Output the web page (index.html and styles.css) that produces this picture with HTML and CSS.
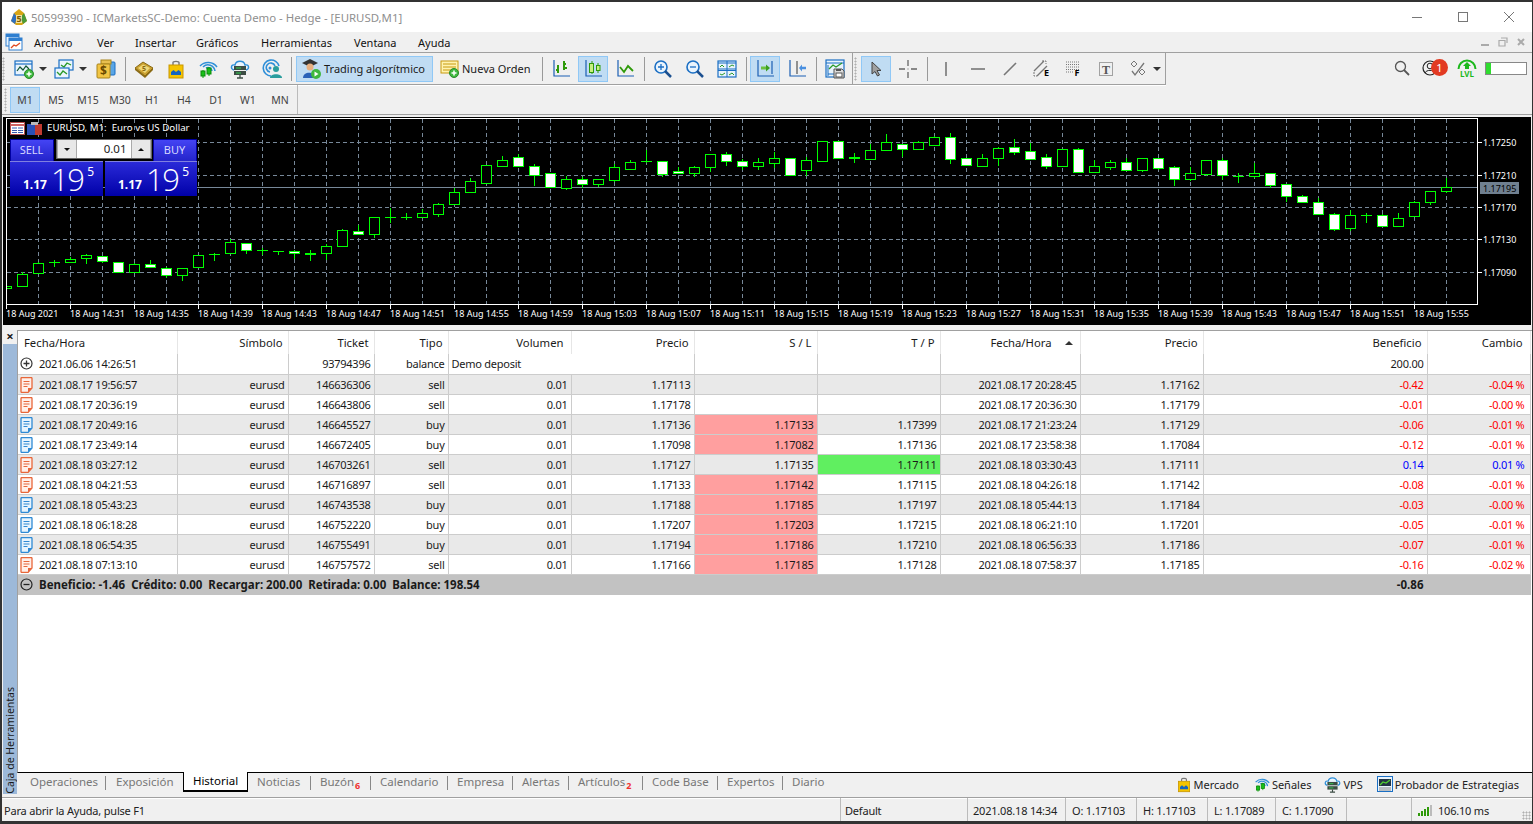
FILE: index.html
```html
<!DOCTYPE html>
<html lang="es">

<head>
	<meta charset="UTF-8">
	<title>50599390 - ICMarketsSC-Demo: Cuenta Demo - Hedge - [EURUSD,M1]</title>
	<link rel="stylesheet" href="styles.css">
</head>

<body>
	<svg class="defs" width="0" height="0">
		<symbol id="i-bag" viewBox="0 0 20 20">
			<path d="M7 6V3.5C7 2 13 2 13 3.5V6" fill="none" stroke="#777" stroke-width="1.4"/>
			<rect x="3" y="6" width="14" height="13" fill="#f5c400" stroke="#c89600"/>
			<path d="M5 16V13L7.5 11L10 13L12.5 11L15 13V16Z" fill="#1565c0"/>
		</symbol>
		<symbol id="i-signal" viewBox="0 0 20 20">
			<path d="M5 8A7 7 0 0 1 17 12M8 9A4 4 0 0 1 14 12M2 7A11 11 0 0 1 19 8" fill="none" stroke="#2f8fd8" stroke-width="1.5"/>
			<path d="M5 11V19M11 8V17" stroke="#0a0" stroke-width="1"/>
			<rect x="3" y="12" width="4" height="5" fill="#18c018" stroke="#0a8a0a"/>
			<rect x="9" y="9" width="4" height="6" fill="#18c018" stroke="#0a8a0a"/>
		</symbol>
		<symbol id="i-vps" viewBox="0 0 20 20">
			<path d="M4 11C0 10 1 5 5 6C6 1 14 1 15 6C19 5 20 10 16 11" fill="#eaf4fd" stroke="#2f8fd8" stroke-width="1.4"/>
			<rect x="4" y="7" width="12" height="4" fill="#3c4c44"/>
			<rect x="4" y="12" width="12" height="4" fill="#3c4c44"/>
			<path d="M6 9H11M6 14H11" stroke="#30d050"/>
			<path d="M10 16V19M7 19H13" stroke="#3c4c44" stroke-width="1.3"/>
		</symbol>
		<symbol id="i-doc-sell" viewBox="0 0 13 16">
			<path d="M1 1.5Q1 .5 2 .5H11Q12 .5 12 1.5V11L8 15.5H2Q1 15.5 1 14.5Z" fill="#fff0ea" stroke="#e8673a" stroke-width="1.3"/>
			<path d="M3.5 4.5H9.5M3.5 7H9.5M3.5 9.5H7.5" stroke="#e8673a"/>
			<path d="M8 15V11H12Z" fill="#e8673a"/>
		</symbol>
		<symbol id="i-doc-buy" viewBox="0 0 13 16">
			<path d="M1 1.5Q1 .5 2 .5H11Q12 .5 12 1.5V11L8 15.5H2Q1 15.5 1 14.5Z" fill="#e8f4fd" stroke="#2f8ad4" stroke-width="1.3"/>
			<path d="M3.5 4.5H9.5M3.5 7H9.5M3.5 9.5H7.5" stroke="#2f8ad4"/>
			<path d="M8 15V11H12Z" fill="#2f8ad4"/>
		</symbol>
	</svg>

	<div class="window">
		<div class="titlebar">
			<svg class="title-icon" width="18" height="18" viewBox="0 0 18 18">
				<path d="M9 1L14 5L17 13L12 17H6L1 13L4 5Z" fill="#d9a514"/>
				<path d="M1 13L4 5L7 9L5 16Z" fill="#2f6fc0"/>
				<path d="M17 13L14 5L11 9L13 16Z" fill="#4a9a3a"/>
				<path d="M6 7H12V15H6Z" fill="#f3e2a0"/>
				<text x="9" y="14" class="title-five">5</text>
			</svg>
			<span class="title-text">50599390 - ICMarketsSC-Demo: Cuenta Demo - Hedge - [EURUSD,M1]</span>
			<div class="win-btns">
				<svg width="12" height="12" viewBox="0 0 12 12"><path d="M1 6.5H11" stroke="#777"/></svg>
				<svg width="12" height="12" viewBox="0 0 12 12"><rect x="1.5" y="1.5" width="9" height="9" fill="none" stroke="#777"/></svg>
				<svg width="12" height="12" viewBox="0 0 12 12"><path d="M1 1L11 11M11 1L1 11" stroke="#777"/></svg>
			</div>
		</div>

		<div class="menubar">
			<svg class="menu-icon" width="18" height="18" viewBox="0 0 18 18">
				<rect x="1" y="1" width="13" height="12" fill="#e8f3fc" stroke="#2f7fd0"/>
				<rect x="1" y="1" width="13" height="3" fill="#2f7fd0"/>
				<rect x="4" y="5" width="13" height="12" fill="#fff" stroke="#2f7fd0"/>
				<rect x="4" y="5" width="13" height="3" fill="#2f7fd0"/>
				<path d="M6 15L9 12L11 13L15 10" fill="none" stroke="#e04a20" stroke-width="1.3"/>
			</svg>
			<span class="menu-item item-archivo">Archivo</span>
			<span class="menu-item item-ver">Ver</span>
			<span class="menu-item item-insertar">Insertar</span>
			<span class="menu-item item-graficos">Gráficos</span>
			<span class="menu-item item-herr">Herramientas</span>
			<span class="menu-item item-ventana">Ventana</span>
			<span class="menu-item">Ayuda</span>
			<div class="mdi-btns">
				<svg width="10" height="10" viewBox="0 0 10 10"><path d="M1 8H9" stroke="#aaa" stroke-width="2"/></svg>
				<svg width="10" height="10" viewBox="0 0 10 10"><path d="M3 1H9V6M1 3.5H7V9H1Z" fill="none" stroke="#aaa" stroke-width="1.2"/></svg>
				<svg width="10" height="10" viewBox="0 0 10 10"><path d="M2 2L8 8M8 2L2 8" stroke="#aaa" stroke-width="2"/></svg>
			</div>
		</div>

		<div class="toolbar">
			<div class="toolbar-left">
				<span class="grip"></span>
				<div class="btn split">
					<svg width="20" height="20" viewBox="0 0 20 20">
						<rect x="1" y="2" width="17" height="14" fill="#eaf4fd" stroke="#1b6fc4" stroke-width="1.2"/>
						<path d="M1 5H18" stroke="#1b6fc4" stroke-width="1.2"/>
						<path d="M3 12L6 8L9 11L12 7L15 10" fill="none" stroke="#153" stroke-width="1.2"/>
						<circle cx="15" cy="15" r="4.5" fill="#3fb83f" stroke="#2a8a2a"/>
						<path d="M15 12.5V17.5M12.5 15H17.5" stroke="#fff" stroke-width="1.5"/>
					</svg>
					<span class="caret"></span>
				</div>
				<div class="btn split">
					<svg width="20" height="20" viewBox="0 0 20 20">
						<rect x="5" y="1" width="14" height="10" fill="#eaf4fd" stroke="#1b6fc4" stroke-width="1.2"/>
						<path d="M7 6L10 8L13 4L17 6" fill="none" stroke="#2a9a2a" stroke-width="1.3"/>
						<rect x="1" y="9" width="14" height="10" fill="#eaf4fd" stroke="#1b6fc4" stroke-width="1.2"/>
						<path d="M3 13L6 16L9 12L13 15" fill="none" stroke="#2a9a2a" stroke-width="1.3"/>
					</svg>
					<span class="caret"></span>
				</div>
				<div class="btn narrow-gap">
					<svg width="20" height="20" viewBox="0 0 20 20">
						<rect x="8" y="3" width="11" height="13" rx="1" fill="#5aa6e6" stroke="#1b6fc4"/>
						<rect x="5" y="1" width="10" height="4" fill="#e8c050" stroke="#a8841a"/>
						<rect x="1" y="5" width="13" height="14" rx="1" fill="#f2c544" stroke="#a8841a"/>
						<text x="7.5" y="16" class="dollar">$</text>
					</svg>
				</div>
				<span class="sep"></span>
				<div class="btn">
					<svg width="20" height="20" viewBox="0 0 20 20">
						<path d="M1 9L9 3L19 9L11 17Z" fill="#c9a030" stroke="#8a6a14"/>
						<path d="M4 9L9 5.5L16 9L11 14Z" fill="#f0d878"/>
						<path d="M1 9V11L11 19L19 11V9L11 17Z" fill="#8a6a14"/>
						<text x="10" y="12" class="book-five">5</text>
					</svg>
				</div>
				<div class="btn"><svg width="20" height="20"><use href="#i-bag"/></svg></div>
				<div class="btn"><svg width="20" height="20"><use href="#i-signal"/></svg></div>
				<div class="btn"><svg width="20" height="20"><use href="#i-vps"/></svg></div>
				<div class="btn">
					<svg width="20" height="20" viewBox="0 0 20 20">
						<path d="M9 17A8 8 0 1 1 17 7M8 13A4.5 4.5 0 1 1 13 7" fill="none" stroke="#2f8fd8" stroke-width="1.6"/>
						<circle cx="8" cy="9" r="1.5" fill="#2f8fd8"/>
						<circle cx="14" cy="10" r="3" fill="#2a9d9d"/>
						<path d="M8 19C8 14 20 14 20 19Z" fill="#2a9d9d"/>
					</svg>
				</div>
				<span class="sep sep-wide"></span>
				<div class="btn-text on trading">
					<svg width="22" height="22" viewBox="0 0 22 22">
						<path d="M2 5L10 1L18 5L10 9Z" fill="#333"/>
						<circle cx="10" cy="9" r="3.5" fill="#e8b080"/>
						<path d="M3 20C3 13 15 13 15 20Z" fill="#2b62b8"/>
						<circle cx="16" cy="16" r="5" fill="#3fb83f"/>
						<path d="M14.5 13.5L18.5 16L14.5 18.5Z" fill="#fff"/>
					</svg>
					<span>Trading algorítmico</span>
				</div>
				<div class="btn-text order">
					<svg width="20" height="20" viewBox="0 0 20 20">
						<rect x="1" y="2" width="17" height="12" fill="#fff3b0" stroke="#c89a10"/>
						<path d="M3 5H16M3 8H16M3 11H11" stroke="#c89a10"/>
						<circle cx="14" cy="14" r="4.5" fill="#3fb83f" stroke="#2a8a2a"/>
						<path d="M14 11.5V16.5M11.5 14H16.5" stroke="#fff" stroke-width="1.5"/>
					</svg>
					<span>Nueva Orden</span>
				</div>
				<span class="sep sep-order"></span>
				<div class="btn">
					<svg width="20" height="20" viewBox="0 0 20 20">
						<path d="M3 1V17H19" fill="none" stroke="#1b5fb4" stroke-width="1.2"/>
						<path d="M7 14V6M5 11H7M13 11V2M13 5H15M13 9H16" stroke="#2f9a0a" stroke-width="2"/>
					</svg>
				</div>
				<div class="btn on">
					<svg width="20" height="20" viewBox="0 0 20 20">
						<path d="M3 1V17H19" fill="none" stroke="#1b5fb4" stroke-width="1.2"/>
						<path d="M9 2V15M15 4V14" stroke="#2f9a0a"/>
						<rect x="6.5" y="4.5" width="4" height="9" fill="#c8f080" stroke="#2f9a0a"/>
						<rect x="13.5" y="6.5" width="3.5" height="5" fill="#c8f080" stroke="#2f9a0a"/>
					</svg>
				</div>
				<div class="btn">
					<svg width="20" height="20" viewBox="0 0 20 20">
						<path d="M3 1V17H19" fill="none" stroke="#1b5fb4" stroke-width="1.2"/>
						<path d="M5 8L9 13L13 7L18 12" fill="none" stroke="#2f9a0a" stroke-width="1.8"/>
					</svg>
				</div>
				<span class="sep"></span>
				<div class="btn">
					<svg width="20" height="20" viewBox="0 0 20 20">
						<circle cx="8" cy="8" r="6" fill="#eaf4fd" stroke="#1b6fc4" stroke-width="1.6"/>
						<path d="M8 5V11M5 8H11" stroke="#1b6fc4" stroke-width="1.3"/>
						<path d="M12 12L18 18" stroke="#1b5090" stroke-width="2.5"/>
					</svg>
				</div>
				<div class="btn">
					<svg width="20" height="20" viewBox="0 0 20 20">
						<circle cx="8" cy="8" r="6" fill="#eaf4fd" stroke="#1b6fc4" stroke-width="1.6"/>
						<path d="M5 8H11" stroke="#1b6fc4" stroke-width="1.3"/>
						<path d="M12 12L18 18" stroke="#1b5090" stroke-width="2.5"/>
					</svg>
				</div>
				<div class="btn">
					<svg width="20" height="20" viewBox="0 0 20 20">
						<rect x="1" y="2" width="18" height="16" fill="#e8f3fc" stroke="#1b6fc4" stroke-width="1.2"/>
						<path d="M10 2V18M1 10H19M1 11.5H19M1 4H19" stroke="#1b6fc4"/>
						<path d="M3 8L5 6L7 8M12 8L15 6L17 7M3 15L5 16L8 14M12 16L15 14L17 16" fill="none" stroke="#2a9a2a"/>
					</svg>
				</div>
				<span class="sep"></span>
				<div class="btn on">
					<svg width="20" height="20" viewBox="0 0 20 20">
						<path d="M3 1V17H19M17 2V15" fill="none" stroke="#1b5fb4" stroke-width="1.2"/>
						<path d="M6 9H12" stroke="#6cc040" stroke-width="3"/>
						<path d="M11 5.5L15 9L11 12.5Z" fill="#3aa020"/>
					</svg>
				</div>
				<div class="btn">
					<svg width="20" height="20" viewBox="0 0 20 20">
						<path d="M3 1V17H19" fill="none" stroke="#1b5fb4" stroke-width="1.2"/>
						<path d="M10 2V15" stroke="#333"/>
						<path d="M14 9H19" stroke="#4a90e0" stroke-width="2.5"/>
						<path d="M15 5.5L12 9L15 12.5Z" fill="#4a90e0"/>
					</svg>
				</div>
				<span class="sep"></span>
				<div class="btn">
					<svg width="20" height="20" viewBox="0 0 20 20">
						<rect x="1" y="1" width="18" height="17" fill="#e8f3fc" stroke="#1b6fc4" stroke-width="1.2"/>
						<path d="M1 4H19M3 6V17M3 15H12" stroke="#1b6fc4"/>
						<path d="M4 10L8 6L11 8L17 4" fill="none" stroke="#2a9a2a" stroke-width="1.3"/>
						<path d="M9 10H17L19 12V19H9Z" fill="#ddd" stroke="#555"/>
						<rect x="11" y="14" width="6" height="4" fill="#fff" stroke="#555"/>
						<rect x="11" y="10" width="5" height="2" fill="#555"/>
					</svg>
				</div>
				<span class="toolbar-edge"></span>
				<span class="grip"></span>
				<div class="btn on">
					<svg width="20" height="20" viewBox="0 0 20 20">
						<path d="M6 3L6 15L9 12.5L11.5 17L13.5 16L11 11.5H15Z" fill="#a0a0a0" stroke="#444"/>
					</svg>
				</div>
				<div class="btn">
					<svg width="20" height="20" viewBox="0 0 20 20">
						<path d="M10 1V7M10 13V19M1 10H7M13 10H19" stroke="#666" stroke-width="1.3"/>
						<rect x="9.5" y="9.5" width="1" height="1" fill="#666"/>
					</svg>
				</div>
				<span class="sep"></span>
				<div class="btn">
					<svg width="20" height="20" viewBox="0 0 20 20"><path d="M10 3V17" stroke="#777" stroke-width="1.6"/></svg>
				</div>
				<div class="btn">
					<svg width="20" height="20" viewBox="0 0 20 20"><path d="M3 10H17" stroke="#777" stroke-width="1.6"/></svg>
				</div>
				<div class="btn">
					<svg width="20" height="20" viewBox="0 0 20 20"><path d="M4 16L16 4" stroke="#777" stroke-width="1.6"/></svg>
				</div>
				<div class="btn">
					<svg width="20" height="20" viewBox="0 0 20 20">
						<path d="M2 12L12 2M5 17L15 7" stroke="#777" stroke-width="1.4"/>
						<path d="M10 2H14V5M2 13V17H5" fill="none" stroke="#777" stroke-dasharray="2 1"/>
						<text x="14.5" y="17" class="tool-letter">E</text>
					</svg>
				</div>
				<div class="btn">
					<svg width="20" height="20" viewBox="0 0 20 20">
						<path d="M2 3H16M2 5.5H16M2 8H16M2 10.5H16M2 13H9" stroke="#777" stroke-dasharray="1 1"/>
						<text x="13" y="17" class="tool-letter">F</text>
					</svg>
				</div>
				<div class="btn">
					<svg width="20" height="20" viewBox="0 0 20 20">
						<rect x="3.5" y="3.5" width="13" height="13" fill="none" stroke="#555" stroke-dasharray="1 1"/>
						<text x="10" y="14.5" class="tool-t">T</text>
					</svg>
				</div>
				<div class="btn split-tool">
					<svg width="20" height="20" viewBox="0 0 20 20">
						<path d="M6 2L9 5L6 8L3 5Z M14 10L17 13L14 16L11 13Z" fill="none" stroke="#777"/>
						<path d="M4 12L7 16L16 4" fill="none" stroke="#777" stroke-width="1.3"/>
					</svg>
					<span class="caret"></span>
				</div>
			</div>
			<div class="toolbar-right">
				<svg class="right-search" width="16" height="16" viewBox="0 0 16 16">
					<circle cx="6.5" cy="6.5" r="5" fill="none" stroke="#555" stroke-width="1.3"/>
					<path d="M10 10L15 15" stroke="#555" stroke-width="1.8"/>
				</svg>
				<div class="profile">
					<svg width="16" height="16" viewBox="0 0 16 16">
						<circle cx="8" cy="8" r="7" fill="none" stroke="#222" stroke-width="1.2"/>
						<circle cx="8" cy="6" r="2.8" fill="none" stroke="#222"/>
						<path d="M3 13C4 9.5 12 9.5 13 13" fill="none" stroke="#222"/>
					</svg>
					<span class="badge">1</span>
				</div>
				<div class="lvl">
					<svg width="20" height="11" viewBox="0 0 20 11">
						<path d="M1.5 10A8.5 8.5 0 0 1 18.5 10" fill="none" stroke="#1cb81c" stroke-width="2"/>
						<path d="M10 3L14 7H12V10H8V7H6Z" fill="#1cb81c"/>
					</svg>
					<span>LVL</span>
				</div>
				<div class="meter"><span class="meter-fill"></span></div>
			</div>
		</div>

		<div class="timeframes">
			<span class="grip"></span>
			<span class="tf on">M1</span>
			<span class="tf">M5</span>
			<span class="tf">M15</span>
			<span class="tf">M30</span>
			<span class="tf">H1</span>
			<span class="tf">H4</span>
			<span class="tf">D1</span>
			<span class="tf">W1</span>
			<span class="tf">MN</span>
			<span class="tf-end"></span>
		</div>

		<div class="chart">
			<svg id="chart-svg" class="chart-svg" width="1527" height="208" viewBox="3 117 1527 208"></svg>
			<div class="chart-head">
				<svg width="15" height="13" viewBox="0 0 15 13">
					<rect x=".5" y=".5" width="14" height="12" fill="#fff" stroke="#b04a4a"/>
					<path d="M.5 3H14.5" stroke="#d06060" stroke-width="2"/>
					<path d="M2 6H7M8 6H13M2 8.5H7M8 8.5H13M2 10.5H7M8 10.5H13" stroke="#3a5ab0"/>
				</svg>
				<svg width="15" height="13" viewBox="0 0 15 13">
					<rect x="0" y="2" width="8" height="11" fill="#2a50b8"/>
					<rect x="8" y="2" width="7" height="11" fill="#c03a30"/>
					<rect x="4" y="0" width="7" height="3" fill="#bbb"/>
				</svg>
				<span>EURUSD, M1:&nbsp; Euro vs US Dollar</span>
			</div>
			<div class="trade-panel">
				<div class="trade-top">
					<span class="trade-btn">SELL</span>
					<div class="spinner">
						<span class="spin-btn"><span class="spin-down"></span></span>
						<span class="spin-value">0.01</span>
						<span class="spin-btn"><span class="spin-up"></span></span>
					</div>
					<span class="trade-btn">BUY</span>
				</div>
				<div class="trade-prices">
					<div class="price"><span class="price-small">1.17</span><span class="price-big">19</span><span class="price-sup">5</span></div>
					<div class="price"><span class="price-small">1.17</span><span class="price-big">19</span><span class="price-sup">5</span></div>
				</div>
			</div>
		</div>

		<div class="toolbox">
			<div class="side">
				<span class="side-close">×</span>
				<div class="side-strip"><span>Caja de Herramientas</span></div>
			</div>
			<div class="main">
				<div class="history">
					<table class="grid">
						<colgroup>
							<col class="c-date"><col class="c-sym"><col class="c-ticket"><col class="c-type"><col class="c-vol"><col class="c-price"><col class="c-sl"><col class="c-tp"><col class="c-close"><col class="c-price2"><col class="c-profit"><col class="c-change">
						</colgroup>
						<thead>
							<tr>
								<th class="left">Fecha/Hora</th><th>Símbolo</th><th>Ticket</th><th>Tipo</th><th class="th-vol">Volumen</th><th>Precio</th><th>S / L</th><th>T / P</th>
								<th class="sorted">Fecha/Hora <span class="sort-up"></span></th><th>Precio</th><th>Beneficio</th><th class="th-change">Cambio</th>
							</tr>
						</thead>
						<tbody>
							<tr>
								<td class="time"><svg class="round" width="13" height="13" viewBox="0 0 13 13"><circle cx="6.5" cy="6.5" r="5.5" fill="#fff" stroke="#333" stroke-width="1.2"/><path d="M6.5 3.5V9.5M3.5 6.5H9.5" stroke="#333" stroke-width="1.3"/></svg>2021.06.06 14:26:51</td>
								<td></td><td>93794396</td><td>balance</td><td class="left" colspan="2">Demo deposit</td><td></td><td></td><td></td><td></td><td>200.00</td><td></td>
							</tr>
							<tr class="band">
								<td class="time"><svg width="13" height="16"><use href="#i-doc-sell"/></svg>2021.08.17 19:56:57</td>
								<td>eurusd</td><td>146636306</td><td>sell</td><td>0.01</td><td>1.17113</td><td></td><td></td><td>2021.08.17 20:28:45</td><td>1.17162</td><td class="loss">-0.42</td><td class="loss pct">-0.04 %</td>
							</tr>
							<tr>
								<td class="time"><svg width="13" height="16"><use href="#i-doc-sell"/></svg>2021.08.17 20:36:19</td>
								<td>eurusd</td><td>146643806</td><td>sell</td><td>0.01</td><td>1.17178</td><td></td><td></td><td>2021.08.17 20:36:30</td><td>1.17179</td><td class="loss">-0.01</td><td class="loss pct">-0.00 %</td>
							</tr>
							<tr class="band">
								<td class="time"><svg width="13" height="16"><use href="#i-doc-buy"/></svg>2021.08.17 20:49:16</td>
								<td>eurusd</td><td>146645527</td><td>buy</td><td>0.01</td><td>1.17136</td><td class="hit-sl">1.17133</td><td>1.17399</td><td>2021.08.17 21:23:24</td><td>1.17129</td><td class="loss">-0.06</td><td class="loss pct">-0.01 %</td>
							</tr>
							<tr>
								<td class="time"><svg width="13" height="16"><use href="#i-doc-buy"/></svg>2021.08.17 23:49:14</td>
								<td>eurusd</td><td>146672405</td><td>buy</td><td>0.01</td><td>1.17098</td><td class="hit-sl">1.17082</td><td>1.17136</td><td>2021.08.17 23:58:38</td><td>1.17084</td><td class="loss">-0.12</td><td class="loss pct">-0.01 %</td>
							</tr>
							<tr class="band">
								<td class="time"><svg width="13" height="16"><use href="#i-doc-sell"/></svg>2021.08.18 03:27:12</td>
								<td>eurusd</td><td>146703261</td><td>sell</td><td>0.01</td><td>1.17127</td><td>1.17135</td><td class="hit-tp">1.17111</td><td>2021.08.18 03:30:43</td><td>1.17111</td><td class="gain">0.14</td><td class="gain pct">0.01 %</td>
							</tr>
							<tr>
								<td class="time"><svg width="13" height="16"><use href="#i-doc-sell"/></svg>2021.08.18 04:21:53</td>
								<td>eurusd</td><td>146716897</td><td>sell</td><td>0.01</td><td>1.17133</td><td class="hit-sl">1.17142</td><td>1.17115</td><td>2021.08.18 04:26:18</td><td>1.17142</td><td class="loss">-0.08</td><td class="loss pct">-0.01 %</td>
							</tr>
							<tr class="band">
								<td class="time"><svg width="13" height="16"><use href="#i-doc-buy"/></svg>2021.08.18 05:43:23</td>
								<td>eurusd</td><td>146743538</td><td>buy</td><td>0.01</td><td>1.17188</td><td class="hit-sl">1.17185</td><td>1.17197</td><td>2021.08.18 05:44:13</td><td>1.17184</td><td class="loss">-0.03</td><td class="loss pct">-0.00 %</td>
							</tr>
							<tr>
								<td class="time"><svg width="13" height="16"><use href="#i-doc-buy"/></svg>2021.08.18 06:18:28</td>
								<td>eurusd</td><td>146752220</td><td>buy</td><td>0.01</td><td>1.17207</td><td class="hit-sl">1.17203</td><td>1.17215</td><td>2021.08.18 06:21:10</td><td>1.17201</td><td class="loss">-0.05</td><td class="loss pct">-0.01 %</td>
							</tr>
							<tr class="band">
								<td class="time"><svg width="13" height="16"><use href="#i-doc-buy"/></svg>2021.08.18 06:54:35</td>
								<td>eurusd</td><td>146755491</td><td>buy</td><td>0.01</td><td>1.17194</td><td class="hit-sl">1.17186</td><td>1.17210</td><td>2021.08.18 06:56:33</td><td>1.17186</td><td class="loss">-0.07</td><td class="loss pct">-0.01 %</td>
							</tr>
							<tr>
								<td class="time"><svg width="13" height="16"><use href="#i-doc-sell"/></svg>2021.08.18 07:13:10</td>
								<td>eurusd</td><td>146757572</td><td>sell</td><td>0.01</td><td>1.17166</td><td class="hit-sl">1.17185</td><td>1.17128</td><td>2021.08.18 07:58:37</td><td>1.17185</td><td class="loss">-0.16</td><td class="loss pct">-0.02 %</td>
							</tr>
							<tr class="total">
								<td class="time" colspan="10"><svg class="round" width="13" height="13" viewBox="0 0 13 13"><circle cx="6.5" cy="6.5" r="5.5" fill="none" stroke="#222" stroke-width="1.2"/><path d="M3.5 6.5H9.5" stroke="#222" stroke-width="1.3"/></svg>Beneficio: -1.46&nbsp; Crédito: 0.00&nbsp; Recargar: 200.00&nbsp; Retirada: 0.00&nbsp; Balance: 198.54</td>
								<td>-0.86</td><td></td>
							</tr>
						</tbody>
					</table>
				</div>
				<div class="tabs">
					<span class="tab t-oper">Operaciones</span>
					<span class="tab t-expo">Exposición</span>
					<span class="tab active">Historial</span>
					<span class="tab t-noti">Noticias</span>
					<span class="tab t-buzon">Buzón<sub class="count">6</sub></span>
					<span class="tab t-cal">Calendario</span>
					<span class="tab t-emp">Empresa</span>
					<span class="tab t-ale">Alertas</span>
					<span class="tab t-art">Artículos<sub class="count">2</sub></span>
					<span class="tab t-code">Code Base</span>
					<span class="tab t-exp">Expertos</span>
					<span class="tab last">Diario</span>
					<div class="tab-links">
						<span class="tab-link l-market"><svg width="16" height="17"><use href="#i-bag"/></svg>Mercado</span>
						<span class="tab-link l-signal"><svg width="16" height="17"><use href="#i-signal"/></svg>Señales</span>
						<span class="tab-link l-vps"><svg width="17" height="17"><use href="#i-vps"/></svg>VPS</span>
						<span class="tab-link l-tester">
							<svg width="16" height="16" viewBox="0 0 16 16">
								<rect x=".5" y=".5" width="15" height="15" fill="#e8f3fc" stroke="#1b6fc4"/>
								<rect x="2" y="3" width="12" height="7" fill="#234"/>
								<path d="M3 9L6 6L9 7L13 4" fill="none" stroke="#50d030" stroke-width="1.3"/>
								<path d="M2 12H14M2 14H14" stroke="#888"/>
							</svg>Probador de Estrategias</span>
					</div>
				</div>
			</div>
		</div>

		<div class="statusbar">
			<span class="cell s-help">Para abrir la Ayuda, pulse F1</span>
			<span class="cell s-profile">Default</span>
			<span class="cell s-time">2021.08.18 14:34</span>
			<span class="cell s-o">O: 1.17103</span>
			<span class="cell s-h">H: 1.17103</span>
			<span class="cell s-l">L: 1.17089</span>
			<span class="cell s-c">C: 1.17090</span>
			<span class="cell s-blank"></span>
			<span class="cell s-ping">
				<svg width="15" height="12" viewBox="0 0 15 12">
					<path d="M1 9V12M4 7V12M7 5V12M10 3V12" stroke="#2f9a0a" stroke-width="2"/>
					<path d="M13 1V12" stroke="#bbb" stroke-width="2"/>
				</svg>106.10 ms</span>
		</div>
	</div>

	<script src="chart.js"></script>
</body>

</html>
```

FILE: styles.css
```css
* {
	box-sizing: border-box;
}

body {
	margin: 0;
	background-color: #333;
	font-family: "Noto Sans", "Liberation Sans", sans-serif;
	font-size: 11px;
	color: #1a1a1a;
	overflow: hidden;
}

.defs {
	position: absolute;
}

.window {
	display: flex;
	flex-direction: column;
	width: 1530px;
	height: 819px;
	margin: 2px 1px 0 2px;
	background-color: #f0f0f0;
}

/* title and menu */
.titlebar {
	display: flex;
	align-items: center;
	height: 30px;
	padding-left: 8px;
	background-color: #fff;
}

.title-icon {
	margin-right: 3px;
}

.title-five {
	font-size: 9px;
	font-weight: bold;
	fill: #7a5a00;
	text-anchor: middle;
}

.title-text {
	font-size: 11.4px;
	color: #8f8f8f;
}

.win-btns {
	display: flex;
	gap: 34px;
	margin-left: auto;
	margin-right: 17px;
}

.menubar {
	display: flex;
	align-items: center;
	height: 20px;
	padding-left: 3px;
	font-size: 11px;
}

.menu-icon {
	margin-right: 11px;
}

.menu-item {
	margin-right: 22px;
	color: #111;
}

.item-archivo { width: 41px; }
.item-ver { width: 16px; }
.item-insertar { width: 39px; }
.item-graficos { width: 43px; }
.item-herr { width: 71px; }
.item-ventana { width: 42px; }

.mdi-btns {
	display: flex;
	gap: 8px;
	margin-left: auto;
	margin-right: 6px;
}

/* toolbars */
.toolbar {
	display: flex;
	height: 33px;
	border-top: 1px solid #a0a0a0;
}

.toolbar-left {
	display: flex;
	align-items: center;
	width: 1164px;
	height: 32px;
	border-right: 1px solid #a0a0a0;
	border-bottom: 1px solid #a0a0a0;
	box-shadow: 0 1px 0 #fff;
}

.grip {
	flex: none;
	width: 6px;
	height: 24px;
	background-image: radial-gradient(#b0b0b0 45%, transparent 50%);
	background-size: 3px 3px;
	background-repeat: repeat-y;
}

.btn {
	display: flex;
	flex: none;
	align-items: center;
	justify-content: center;
	width: 32px;
	height: 26px;
}

.btn.on {
	background-color: #c0dcf3;
	box-shadow: inset 0 0 0 1px #90c8f6;
	border-left: 1px solid #f0f0f0;
	border-right: 1px solid #f0f0f0;
}

.btn.split {
	justify-content: flex-start;
	gap: 5px;
	width: 40px;
	padding-left: 6px;
}

.btn.split-tool {
	justify-content: flex-start;
	gap: 5px;
	width: 43px;
	padding-left: 6px;
}

.narrow-gap {
	margin-left: 2px;
}

.caret {
	width: 0;
	height: 0;
	border-left: 4px solid transparent;
	border-right: 4px solid transparent;
	border-top: 4px solid #333;
}

.sep {
	flex: none;
	width: 1px;
	height: 24px;
	margin: 0 2px 0 3px;
	background-color: #999;
}

.sep-wide {
	margin-right: 4px;
}

.sep-order {
	margin: 0 2px 0 6px;
}

.toolbar-edge {
	flex: none;
	width: 1px;
	height: 100%;
	background-color: #a0a0a0;
	margin: 0 1px 0 1px;
}

.btn-text {
	display: flex;
	flex: none;
	align-items: center;
	height: 26px;
	font-size: 11px;
	white-space: nowrap;
}

.btn-text.on {
	background-color: #c0dcf3;
	border: 1px solid #90c8f6;
}

.trading {
	width: 137px;
	gap: 2px;
	padding-left: 3px;
}

.order {
	width: 103px;
	gap: 2px;
	padding-left: 7px;
}

.toolbar-right {
	display: flex;
	flex: 1;
	align-items: center;
	justify-content: flex-end;
	height: 30px;
	padding-right: 5px;
}

.right-search {
	margin-right: 12px;
}

.profile {
	position: relative;
	width: 16px;
	height: 16px;
	margin-right: 19px;
}

.badge {
	position: absolute;
	top: -1px;
	left: 9px;
	width: 17px;
	height: 17px;
	border-radius: 50%;
	background-color: #e23a22;
	color: #fff;
	font-size: 11px;
	line-height: 17px;
	text-align: center;
}

.lvl {
	display: flex;
	flex-direction: column;
	align-items: center;
	width: 20px;
	margin-right: 8px;
	color: #1cb81c;
	font-size: 8px;
	font-weight: bold;
	line-height: 8px;
}

.meter {
	width: 42px;
	height: 13px;
	border: 1px solid #888;
	background-color: #fff;
}

.meter-fill {
	display: block;
	width: 5px;
	height: 100%;
	background-color: #2fdc2f;
}

.timeframes {
	display: flex;
	align-items: center;
	height: 30px;
	border-bottom: 1px solid #a0a0a0;
	margin-bottom: 2px;
	padding-left: 2px;
}

.tf {
	flex: none;
	width: 32px;
	height: 26px;
	font-size: 10.5px;
	color: #444;
	line-height: 26px;
	text-align: center;
}

.tf.on {
	width: 30px;
	background-color: #c0dcf3;
	border: 1px solid #90c8f6;
	line-height: 25px;
}

.tf-end {
	flex: none;
	width: 1px;
	height: 100%;
	background-color: #bbb;
	margin-left: 1px;
}

/* chart */
.chart {
	position: relative;
	flex: none;
	height: 208px;
	margin: 0 1px;
	background-color: #000;
}

.chart-svg {
	display: block;
}

.chart-svg text {
	font-family: "Noto Sans", "Liberation Sans", sans-serif;
	font-size: 9px;
	fill: #fff;
}

.chart-svg text.bid {
	fill: #000;
}

.chart-head {
	position: absolute;
	top: 4px;
	left: 7px;
	display: flex;
	align-items: center;
	gap: 2px;
	color: #fff;
	font-size: 9.7px;
	line-height: 14px;
}

.chart-head span {
	margin-left: 3px;
}

.trade-panel {
	position: absolute;
	top: 22px;
	left: 7px;
	width: 187px;
}

.trade-top {
	display: flex;
	justify-content: space-between;
	height: 22px;
}

.trade-btn {
	width: 44px;
	height: 24px;
	padding-right: 1px;
	background: linear-gradient(#4444f4, #2222c8);
	border: 1px solid #0000a0;
	color: #d8d8ff;
	font-size: 11px;
	line-height: 20px;
	text-align: center;
}

.spinner {
	display: flex;
	width: 96px;
	height: 20px;
	background-color: #fff;
	border: 1px solid #666;
}

.spin-btn {
	display: flex;
	flex: none;
	align-items: center;
	justify-content: center;
	width: 20px;
	background-color: #e8e8e8;
	border-right: 1px solid #aaa;
	border-left: 1px solid #aaa;
}

.spin-down {
	border-left: 3px solid transparent;
	border-right: 3px solid transparent;
	border-top: 3px solid #111;
}

.spin-up {
	border-left: 3px solid transparent;
	border-right: 3px solid transparent;
	border-bottom: 3px solid #111;
}

.spin-value {
	flex: 1;
	padding-right: 4px;
	color: #222;
	font-size: 11.5px;
	line-height: 18px;
	text-align: right;
}

.trade-prices {
	display: flex;
	justify-content: space-between;
}

.price {
	display: flex;
	align-items: flex-start;
	width: 93px;
	height: 35px;
	padding-left: 13px;
	background: linear-gradient(#2a2ad8, #0000a8);
	border-top: 1px solid #8080e0;
	color: #fff;
}

.price + .price {
	width: 92px;
}

.price-small {
	margin-top: 15px;
	font-size: 12px;
	font-weight: bold;
	line-height: 16px;
}

.price-big {
	margin-left: 4px;
	margin-top: -1px;
	font-family: "Open Sans", "Noto Sans", sans-serif;
	font-size: 31px;
	font-weight: 300;
	letter-spacing: -1.5px;
	line-height: 36px;
}

.price-sup {
	margin-left: 4px;
	margin-top: 3px;
	font-size: 12px;
	line-height: 14px;
}

/* toolbox */
.toolbox {
	display: flex;
	flex: 1;
	min-height: 0;
}

.side {
	display: flex;
	flex: none;
	flex-direction: column;
	width: 15px;
	padding-left: 1px;
}

.side-close {
	height: 19px;
	font-size: 13px;
	font-weight: bold;
	line-height: 22px;
	text-align: center;
}

.side-strip {
	display: flex;
	flex: 1;
	align-items: flex-end;
	justify-content: center;
	margin-bottom: 3px;
	background-color: #9db9d9;
}

.side-strip span {
	writing-mode: vertical-rl;
	transform: rotate(180deg);
	font-size: 10.5px;
	line-height: 14px;
}

.main {
	display: flex;
	flex: 1;
	flex-direction: column;
	min-width: 0;
	padding-top: 5px;
}

.history {
	flex: 1;
	background-color: #fff;
	border-top: 1px solid #a0a0a0;
	border-left: 1px solid #a0a0a0;
	border-bottom: 1px solid #000;
}

.grid {
	width: 1512px;
	border-collapse: collapse;
	table-layout: fixed;
}

.c-date { width: 159px; }
.c-sym { width: 111px; }
.c-ticket { width: 86px; }
.c-type { width: 74px; }
.c-vol { width: 123px; }
.c-price { width: 123px; }
.c-sl { width: 123px; }
.c-tp { width: 123px; }
.c-close { width: 140px; }
.c-price2 { width: 123px; }
.c-profit { width: 224px; }
.c-change { width: 103px; }

th {
	height: 23px;
	padding: 0 5px 1px 0;
	border-right: 1px solid #e6e6e6;
	font-size: 11.3px;
	font-weight: normal;
	text-align: right;
	white-space: nowrap;
}

th.left {
	padding-left: 6px;
	text-align: left;
}

th.sorted {
	padding-right: 7px;
}

th.th-vol {
	padding-right: 7px;
}

th.th-change {
	padding-right: 7px;
}

.sort-up {
	display: inline-block;
	width: 0;
	height: 0;
	margin-left: 10px;
	margin-bottom: 2px;
	border-left: 4px solid transparent;
	border-right: 4px solid transparent;
	border-bottom: 4px solid #333;
}

td {
	height: 20px;
	padding: 0 3px 0 0;
	border-right: 1px solid #ccc;
	border-bottom: 1px solid #ccc;
	font-size: 11px;
	letter-spacing: -0.25px;
	line-height: 19px;
	text-align: right;
	white-space: nowrap;
}

td.left {
	padding-left: 3px;
	text-align: left;
}

td.time {
	padding-left: 2px;
	text-align: left;
}

td.time svg {
	margin-right: 6px;
	vertical-align: -4px;
}

td.time svg.round {
	vertical-align: -2px;
}

td.pct {
	padding-right: 5px;
}

.band td {
	background-color: #e9e9e9;
}

td.hit-sl {
	background-color: #ff9f9f;
}

td.hit-tp {
	background-color: #60ef60;
}

td.loss {
	color: #f00;
}

td.gain {
	color: #00f;
}

.total td {
	background-color: #c2c2c2;
	border-color: #c2c2c2;
	font-size: 11.5px;
	font-weight: bold;
	letter-spacing: 0;
}

/* tabs */
.tabs {
	display: flex;
	flex: none;
	align-items: flex-start;
	height: 24px;
	font-size: 11px;
}

.tab {
	flex: none;
	height: 14px;
	margin-top: 3px;
	padding-left: 9px;
	border-right: 1px solid #888;
	color: #777;
	font-size: 11.5px;
	line-height: 12px;
}

.tab.active {
	width: 65px;
	height: 20px;
	margin-top: -1px;
	padding-left: 0;
	background-color: #fff;
	border: 2px solid #000;
	border-width: 0 1px 2px 1px;
	color: #000;
	line-height: 18px;
	text-align: center;
}

.t-oper { width: 89px; padding-left: 13px; }
.t-expo { width: 77px; padding-left: 10px; border-right: 0; }
.t-noti { width: 63px; }
.t-buzon { width: 60px; }
.t-cal { width: 77px; }
.t-emp { width: 65px; }
.t-ale { width: 56px; }
.t-art { width: 74px; }
.t-code { width: 75px; }
.t-exp { width: 65px; }
.tab.last { border-right: 0; }

.count {
	margin-left: 1px;
	color: #f03030;
	font-size: 9px;
	font-weight: bold;
	line-height: 0;
}

.tab-links {
	display: flex;
	align-items: center;
	height: 22px;
	margin-left: auto;
	padding-right: 13px;
	color: #222;
	font-size: 11px;
}

.tab-link {
	display: flex;
	align-items: center;
	gap: 2px;
}

.l-market { margin-right: 15px; }
.l-signal { margin-right: 13px; }
.l-vps { margin-right: 14px; }

/* status bar */
.statusbar {
	display: flex;
	flex: none;
	align-items: stretch;
	height: 24px;
	border-top: 1px solid #a0a0a0;
	box-shadow: inset 0 1px 0 #fff;
	font-size: 11px;
	letter-spacing: -0.2px;
	line-height: 26px;
	color: #222;
}

.cell {
	flex: none;
	padding-left: 5px;
	border-right: 1px solid #bbb;
	white-space: nowrap;
}

.s-help { width: 839px; padding-left: 2px; }
.s-profile { width: 127px; padding-left: 4px; }
.s-time { width: 98px; }
.s-o { width: 71px; padding-left: 6px; }
.s-h { width: 71px; padding-left: 6px; }
.s-l { width: 68px; padding-left: 6px; }
.s-c { width: 71px; padding-left: 6px; }
.s-blank { width: 65px; }

.s-ping {
	position: relative;
	flex: 1;
	padding-left: 6px;
	border-right: 0;
}

.s-ping svg {
	margin-right: 5px;
	vertical-align: -1px;
}

.s-ping::after {
	content: "";
	position: absolute;
	right: 1px;
	bottom: 1px;
	width: 9px;
	height: 9px;
	background-image: radial-gradient(#b0b0b0 45%, transparent 50%);
	background-size: 3px 3px;
}

/* svg letters */
.dollar {
	font-size: 12px;
	font-weight: bold;
	fill: #6a4a00;
	text-anchor: middle;
}

.book-five {
	font-size: 7px;
	font-weight: bold;
	fill: #8a6a14;
	text-anchor: middle;
}

.tool-letter {
	font-size: 9px;
	font-weight: bold;
	fill: #000;
	text-anchor: middle;
}

.tool-t {
	font-family: "Liberation Serif", serif;
	font-size: 12px;
	font-weight: bold;
	fill: #555;
	text-anchor: middle;
}
```

FILE: chart.js
```js
// wick top, wick bottom, body top, body bottom, white body (y in page pixels)
var candles = [
	[286, 288, 286, 288, 0], [272, 286, 274, 286, 0], [262, 273, 263, 273, 0], [260, 266, 262, 262, 0],
	[257, 262, 259, 262, 0], [254, 263, 255, 258, 0], [256, 262, 256, 261, 1], [262, 272, 262, 272, 1],
	[263, 272, 264, 272, 0], [260, 267, 264, 267, 1], [267, 277, 268, 275, 1], [268, 280, 268, 275, 0],
	[255, 267, 255, 267, 0], [253, 260, 254, 254, 0], [239, 253, 242, 253, 0], [243, 253, 243, 250, 1],
	[248, 254, 250, 250, 0], [251, 254, 251, 251, 0], [250, 258, 251, 253, 1], [250, 260, 253, 254, 1],
	[244, 259, 246, 253, 0], [229, 246, 230, 246, 0], [225, 234, 231, 234, 1], [217, 237, 217, 234, 0],
	[208, 222, 217, 217, 0], [213, 219, 217, 217, 0], [209, 217, 213, 217, 0], [203, 216, 204, 214, 0],
	[188, 204, 192, 204, 0], [178, 192, 181, 192, 0], [165, 183, 165, 183, 0], [156, 166, 160, 166, 0],
	[154, 166, 157, 166, 1], [164, 185, 166, 175, 1], [173, 187, 173, 187, 1], [176, 189, 179, 188, 0],
	[177, 187, 179, 184, 1], [179, 186, 179, 184, 0], [164, 181, 167, 180, 0], [160, 169, 162, 169, 0],
	[150, 162, 161, 161, 0], [161, 176, 161, 174, 1], [167, 173, 171, 173, 1], [166, 176, 167, 173, 0],
	[154, 171, 154, 167, 0], [152, 165, 154, 161, 1], [159, 169, 161, 166, 1], [158, 169, 162, 166, 0],
	[152, 167, 158, 163, 0], [158, 175, 158, 175, 1], [157, 175, 160, 170, 0], [141, 161, 141, 161, 0],
	[141, 158, 141, 158, 1], [153, 162, 157, 158, 1], [144, 159, 150, 159, 0], [134, 150, 142, 150, 0],
	[144, 156, 144, 149, 1], [141, 149, 142, 149, 0], [136, 145, 137, 145, 0], [133, 163, 137, 159, 1],
	[158, 165, 158, 165, 1], [154, 166, 158, 166, 0], [147, 165, 148, 158, 0], [139, 154, 147, 152, 1],
	[143, 159, 151, 159, 1], [154, 168, 157, 166, 1], [149, 166, 149, 166, 0], [148, 172, 149, 172, 1],
	[160, 172, 166, 172, 0], [160, 169, 162, 167, 0], [158, 170, 162, 170, 1], [158, 171, 158, 170, 0],
	[158, 169, 158, 168, 1], [166, 185, 167, 179, 1], [167, 180, 173, 179, 0], [160, 175, 160, 174, 0],
	[158, 179, 160, 175, 1], [173, 182, 176, 176, 0], [163, 177, 173, 176, 0], [173, 187, 173, 185, 1],
	[184, 201, 184, 196, 1], [195, 202, 196, 202, 1], [198, 214, 202, 214, 1], [213, 230, 214, 229, 1],
	[210, 230, 215, 228, 0], [213, 222, 215, 215, 0], [214, 226, 215, 226, 1], [213, 226, 218, 226, 0],
	[201, 216, 202, 216, 0], [191, 204, 191, 202, 0], [178, 192, 187, 191, 0]
];

var GRID_TOP = 118, GRID_LEFT = 6, GRID_BOTTOM = 304, GRID_RIGHT = 1478;
var priceLevels = [[142, "1.17250"], [175, "1.17210"], [207, "1.17170"], [239, "1.17130"], [272, "1.17090"]];

function timeLabel(k) {
	if (k == 0) return "18 Aug 2021";
	var total = 14 * 60 + 27 + k * 4;
	var m = total % 60;
	return "18 Aug " + Math.floor(total / 60) + ":" + (m < 10 ? "0" + m : m);
}

var out = '<clipPath id="plot"><rect x="7" y="119" width="1470" height="185"/></clipPath>';
var i, x;

// grid
for (x = GRID_LEFT + 32; x < GRID_RIGHT; x += 32) {
	out += '<path d="M' + (x + 0.5) + ' ' + (GRID_TOP + 1) + 'V' + GRID_BOTTOM + '" stroke="#778899" stroke-dasharray="4 3"/>';
}
for (i = 0; i < priceLevels.length; i++) {
	var y = priceLevels[i][0] + 0.5;
	out += '<path d="M' + (GRID_LEFT + 1) + ' ' + y + 'H' + GRID_RIGHT + '" stroke="#778899" stroke-dasharray="4 3"/>';
	out += '<path d="M' + GRID_RIGHT + ' ' + y + 'H' + (GRID_RIGHT + 4) + '" stroke="#fff"/>';
	out += '<text x="' + (GRID_RIGHT + 5) + '" y="' + (y + 3.5) + '">' + priceLevels[i][1] + '</text>';
}

// bid line and its label
out += '<path d="M7 187.5H1478" stroke="#778899"/>';
out += '<rect x="1480" y="182" width="39" height="12" fill="#708090"/>';
out += '<text x="1483" y="191.5" class="bid">1.17195</text>';

// candles
out += '<g clip-path="url(#plot)">';
for (i = 0; i < candles.length; i++) {
	var c = candles[i];
	x = GRID_LEFT + i * 16;
	out += '<path d="M' + (x + 0.5) + ' ' + c[0] + 'V' + (c[1] + 1) + '" stroke="#0f0"/>';
	if (c[2] == c[3]) {
		out += '<path d="M' + (x - 5) + ' ' + (c[2] + 0.5) + 'H' + (x + 6) + '" stroke="#0f0"/>';
	} else {
		out += '<rect x="' + (x - 4.5) + '" y="' + (c[2] + 0.5) + '" width="10" height="' + (c[3] - c[2]) + '" fill="' + (c[4] ? "#fff" : "#000") + '" stroke="#0f0"/>';
	}
}
out += '</g>';

// frame, time axis
out += '<rect x="6.5" y="118.5" width="1471" height="186" fill="none" stroke="#fff"/>';
for (i = 0; i * 64 + GRID_LEFT < GRID_RIGHT; i++) {
	x = GRID_LEFT + i * 64;
	out += '<path d="M' + (x + 0.5) + ' 304V309" stroke="#fff"/>';
	out += '<text x="' + x + '" y="317">' + timeLabel(i) + '</text>';
}

document.getElementById("chart-svg").innerHTML = out;
```
